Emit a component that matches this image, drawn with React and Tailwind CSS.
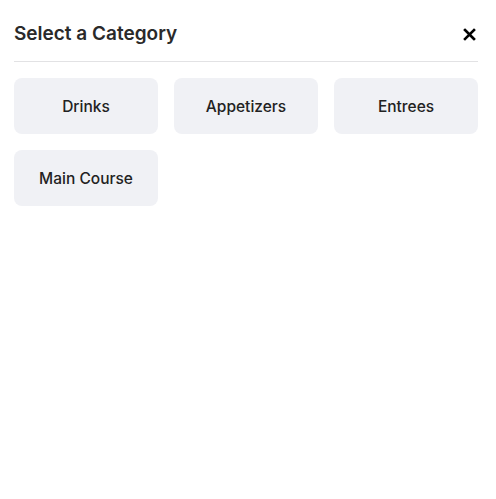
export default function App() {
  const categories = ['Drinks', 'Appetizers', 'Entrees', 'Main Course'];

  return (
    <div className="min-h-screen bg-white pl-[14px] font-['Inter',sans-serif] text-[#222]">
      <div className="w-[464px]">
        <div className="flex items-center justify-between border-b border-[#e2e2e4] pt-[20px] pb-[13px]">
          <h2 className="text-[19px] leading-7 font-semibold text-[#2a2a2a]">Select a Category</h2>
          <button className="mr-[2px] flex h-6 w-6 items-center justify-end text-black">
            <svg width="13" height="13" viewBox="0 0 13 13" fill="none">
              <path d="M2 2L11 11M11 2L2 11" stroke="currentColor" strokeWidth="2.6" strokeLinecap="square" />
            </svg>
          </button>
        </div>

        <div className="mt-4 grid grid-cols-3 gap-4">
          {categories.map((c) => (
            <button
              key={c}
              className="h-14 rounded-lg bg-[#f0f1f5] pt-[2px] text-[15.5px] font-medium text-[#222]"
            >
              {c}
            </button>
          ))}
        </div>
      </div>
    </div>
  );
}
